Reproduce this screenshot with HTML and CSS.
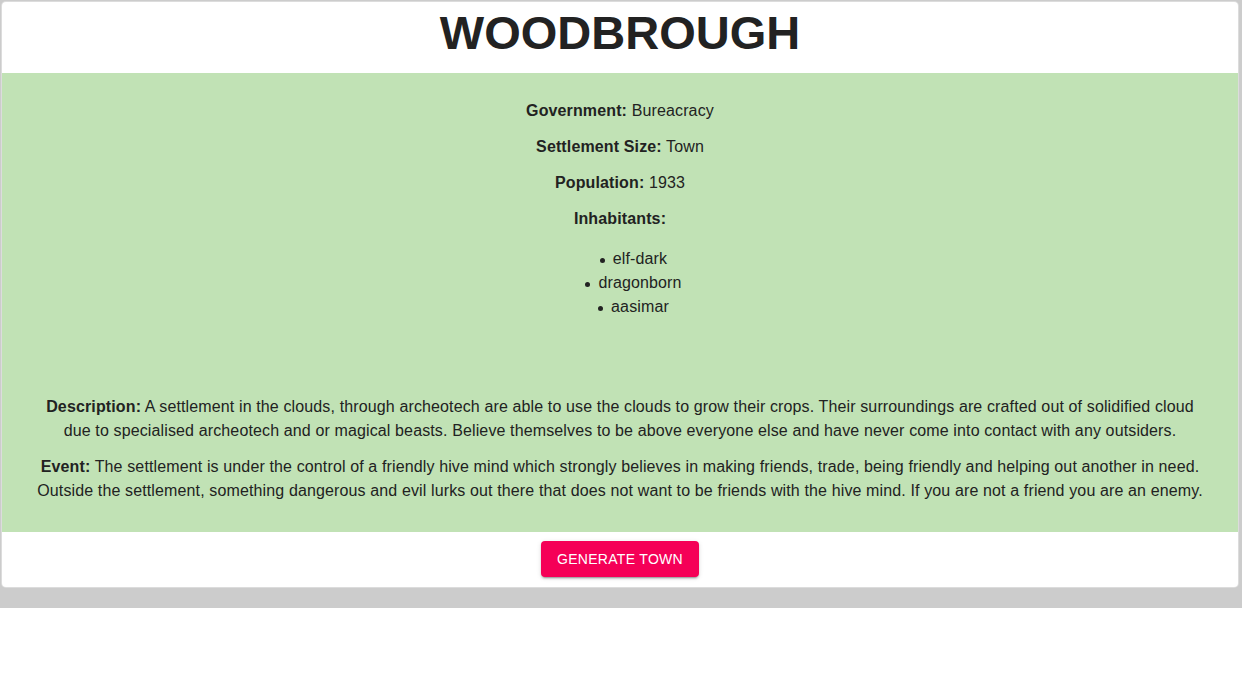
FILE: index.html
```html
<!DOCTYPE html>
<html lang="en">
<head>
<meta charset="utf-8">
<title>Woodbrough</title>
<link rel="stylesheet" href="styles.css">
</head>
<body>
<div class="page">
  <div class="card">
    <header class="card-header">
      <h1 class="title">WOODBROUGH</h1>
    </header>
    <section class="details">
      <p class="field"><strong>Government:</strong> Bureacracy</p>
      <p class="field"><strong>Settlement Size:</strong> Town</p>
      <p class="field"><strong>Population:</strong> 1933</p>
      <p class="field"><strong>Inhabitants:</strong></p>
      <ul class="inhabitants">
        <li><span class="item">elf-dark</span></li>
        <li><span class="item">dragonborn</span></li>
        <li><span class="item">aasimar</span></li>
      </ul>
      <p class="story"><strong>Description:</strong> A settlement in the clouds, through archeotech are able to use the clouds to grow their crops. Their surroundings are crafted out of solidified cloud due to specialised archeotech and or magical beasts. Believe themselves to be above everyone else and have never come into contact with any outsiders.</p>
      <p class="story last"><strong>Event:</strong> The settlement is under the control of a friendly hive mind which strongly believes in making friends, trade, being friendly and helping out another in need. Outside the settlement, something dangerous and evil lurks out there that does not want to be friends with the hive mind. If you are not a friend you are an enemy.</p>
    </section>
    <footer class="card-actions">
      <button class="generate-btn" type="button">Generate Town</button>
    </footer>
  </div>
</div>
</body>
</html>
```

FILE: styles.css
```css
html, body {
  margin: 0;
  padding: 0;
  background: #ffffff;
}

body {
  font-family: "Liberation Sans", Arial, sans-serif;
  color: #222222;
}

.page {
  background: #cccccc;
  padding: 2px 4px 21px 2px;
}

.card {
  background: #ffffff;
  border-radius: 4px;
  overflow: hidden;
  box-shadow: 0 0 0 1px #dcdcdc;
}

.card-header {
  text-align: center;
}

.title {
  margin: 0 0 9px 0;
  font-size: 47px;
  line-height: 62px;
  font-weight: 700;
  color: #222222;
}

.details {
  background: #c1e2b5;
  padding: 26px 30px 29px 30px;
  text-align: center;
  font-size: 16px;
  line-height: 24px;
  letter-spacing: 0.13px;
}

.field {
  margin: 0 0 12px 0;
}

.inhabitants {
  list-style: none;
  margin: 16px 0 76px 0;
  padding: 0 0 0 40px;
}

.item {
  position: relative;
}

.item::before {
  content: "";
  position: absolute;
  left: -13px;
  top: 50%;
  width: 5px;
  height: 5px;
  margin-top: -1px;
  border-radius: 50%;
  background: #222222;
}

.story {
  margin: 0 0 12px 0;
}

.story.last {
  margin-bottom: 0;
}

.card-actions {
  display: flex;
  justify-content: center;
  padding: 9px 0 10px 0;
}

.generate-btn {
  font-family: "Liberation Sans", Arial, sans-serif;
  font-size: 14px;
  line-height: 24px;
  letter-spacing: 0.3px;
  text-transform: uppercase;
  color: #ffffff;
  background: #f50057;
  border: none;
  border-radius: 4px;
  padding: 6px 16px;
  box-shadow: 0 3px 1px -2px rgba(0,0,0,0.2), 0 2px 2px 0 rgba(0,0,0,0.14), 0 1px 5px 0 rgba(0,0,0,0.12);
  cursor: pointer;
}
```
